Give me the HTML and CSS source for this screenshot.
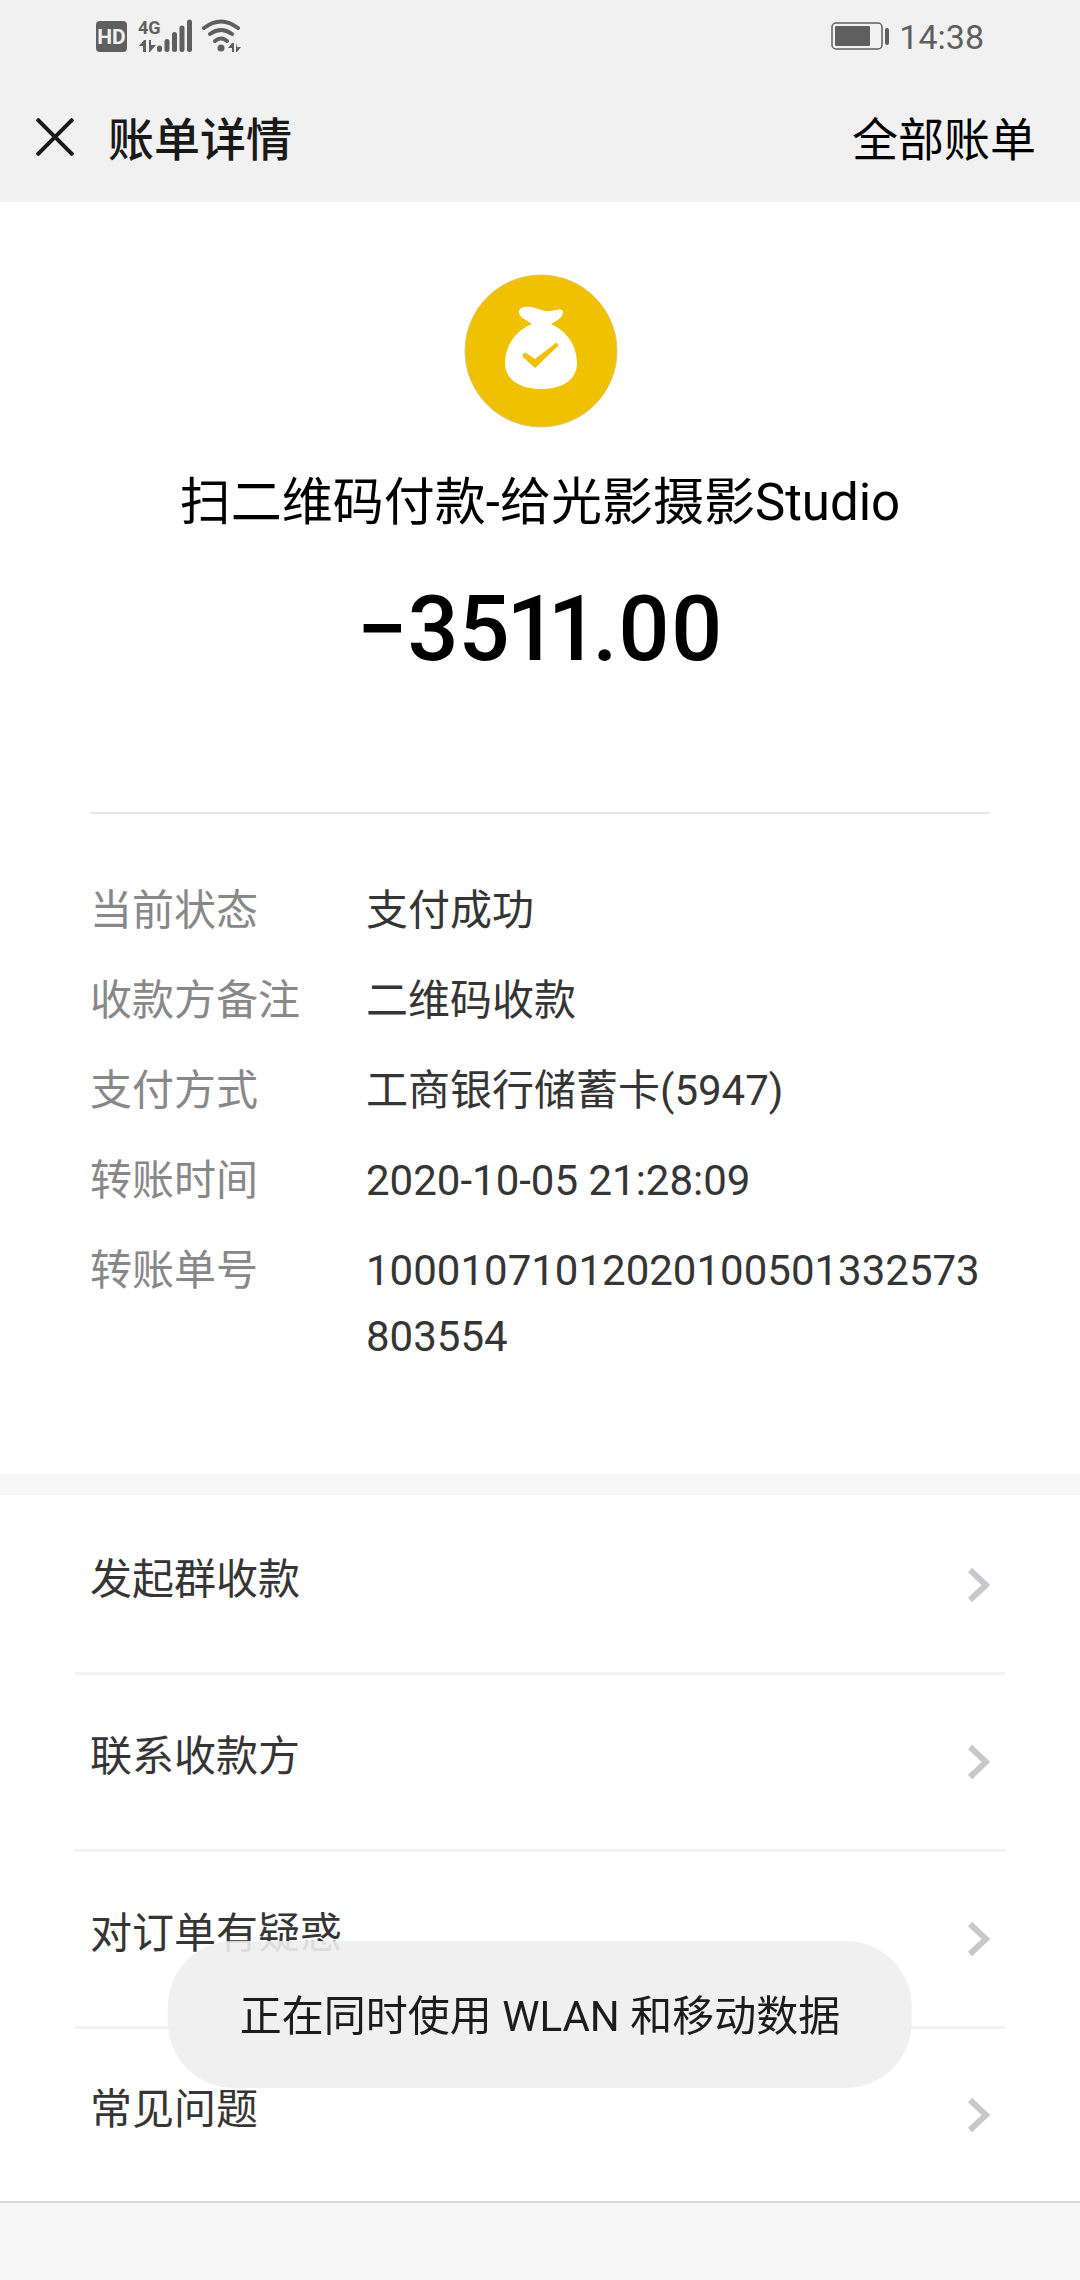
FILE: index.html
```html
<!DOCTYPE html>
<html lang="zh-CN">
<head>
	<meta charset="utf-8">
	<meta name="viewport" content="width=device-width">
	<title>账单详情</title>
	<link rel="stylesheet" href="styles.css">
</head>
<body>
	<div class="statusbar">
		<svg class="status-icons" width="150" height="40" viewBox="0 0 150 40" fill="#5f5f5f">
			<rect x="2" y="5" width="31" height="31" rx="4"/>
			<text x="17.500" y="28" class="hd" text-anchor="middle">HD</text>
			<text x="44" y="18" class="net">4G</text>
			<path d="M45 30l5-6h2v12h-3v-6zM55 24h2v5h5l-6 7h-1z"/>
			<g stroke="#5f5f5f" stroke-width="5" stroke-linecap="round">
				<path d="M65.500 32v1.500M73 25.500v8M80.500 18.500v15M88 12v21.500M95.500 6v27.500"/>
			</g>
			<g fill="none" stroke="#5f5f5f" stroke-width="4" stroke-linecap="round">
				<path d="M110 12q17-13 34 0M116 18q11-8 22 0M121 25q6-5 12 0"/>
			</g>
			<circle cx="127" cy="32" r="3.500"/>
			<path d="M134 32l4-5h2v9h-2v-4zM142 27l1 4h4l-4 5h-1z"/>
		</svg>
		<div class="status-right">
			<svg width="60" height="30" viewBox="0 0 60 30">
				<rect x="1" y="2" width="50" height="26" rx="4" fill="none" stroke="#5f5f5f" stroke-width="1.500"/>
				<rect x="4" y="5" width="35" height="20" rx="1" fill="#5f5f5f"/>
				<rect x="54" y="7" width="4" height="17" rx="2" fill="#5f5f5f"/>
			</svg>
			<span class="time">14:38</span>
		</div>
	</div>

	<header class="header">
		<button class="close" type="button" aria-label="关闭">
			<svg width="38" height="38" viewBox="0 0 38 38" fill="none" stroke="#191919" stroke-width="4">
				<path d="M1 1l36 36M37 1L1 37"/>
			</svg>
		</button>
		<h1 class="title">账单详情</h1>
		<a class="all" href="#">全部账单</a>
	</header>

	<main>
		<section class="bill">
			<div class="summary">
				<svg class="logo" width="156" height="154" viewBox="-1 0 156 154">
					<circle cx="78" cy="77" r="76" fill="#efc100" stroke="#dfc877" stroke-width="1"/>
					<path fill="#fff" d="M69 50C63 46 56 43 56 38C56 33 62 32 68 33C75 34 80 38 88 37C94 36 99 34 100 38C100 43 94 47 88 50C104 57 114 72 114 89C114 106 99 115 78 115C57 115 42 106 42 89C42 72 53 56 69 50Z"/>
					<path fill="#efc100" d="M61 79Q59 80 60 83L72 94L95 72Q96 69 93 69L72 85L63 79Z"/>
				</svg>
				<p class="name">扫二维码付款-给光影摄影Studio</p>
				<p class="amount">−3511.00</p>
			</div>
			<dl class="details">
				<dt>当前状态</dt><dd>支付成功</dd>
				<dt>收款方备注</dt><dd>二维码收款</dd>
				<dt>支付方式</dt><dd>工商银行储蓄卡(5947)</dd>
				<dt>转账时间</dt><dd>2020-10-05 21:28:09</dd>
				<dt>转账单号</dt><dd>10001071012020100501332573803554</dd>
			</dl>
		</section>

		<nav class="links">
			<a class="link" href="#"><span class="label">发起群收款</span><svg class="arrow" width="22" height="36" viewBox="0 0 22 36"><path d="M2 3l16 15L2 33"/></svg></a>
			<a class="link" href="#"><span class="label">联系收款方</span><svg class="arrow" width="22" height="36" viewBox="0 0 22 36"><path d="M2 3l16 15L2 33"/></svg></a>
			<a class="link" href="#"><span class="label">对订单有疑惑</span><svg class="arrow" width="22" height="36" viewBox="0 0 22 36"><path d="M2 3l16 15L2 33"/></svg></a>
			<a class="link" href="#"><span class="label">常见问题</span><svg class="arrow" width="22" height="36" viewBox="0 0 22 36"><path d="M2 3l16 15L2 33"/></svg></a>
		</nav>
	</main>

	<div class="toast" role="status">正在同时使用 WLAN 和移动数据</div>
</body>
</html>
```
FILE: styles.css
```css
* {
	box-sizing: border-box;
}
body {
	min-height: 100vh;
	margin: 0;
	background: #f7f7f7;
	color: #353535;
	font-family: Roboto, "Noto Sans CJK SC", sans-serif;
	font-size: 42px;
	line-height: 66px;
}
h1, p, dl, dd {
	margin: 0;
}
a {
	color: inherit;
	text-decoration: none;
}

/* status bar */
.statusbar {
	display: flex;
	justify-content: space-between;
	align-items: center;
	height: 72px;
	padding: 0 96px 0 94px;
	background: #f1f1f1;
	color: #5f5f5f;
}
.hd {
	fill: #f1f1f1;
	font-size: 21px;
	font-weight: 700;
}
.net {
	font-size: 18px;
	font-weight: 700;
}
.status-right {
	display: flex;
	align-items: center;
	gap: 8px;
}
.time {
	padding-top: 2px;
	font-size: 34px;
}

/* header */
.header {
	display: flex;
	align-items: center;
	height: 130px;
	padding: 0 44px 0 36px;
	background: #f1f1f1;
}
.close {
	display: flex;
	padding: 0;
	border: none;
	background: none;
}
.title,
.all {
	padding-top: 6px;
	font-size: 46px;
}
.title {
	flex: 1;
	margin-left: 34px;
	color: #191919;
	font-weight: 500;
}
.all {
	color: #000;
}

/* bill */
.bill {
	padding: 72px 90px 104px;
	background: #fff;
}
.summary {
	display: flex;
	flex-direction: column;
	align-items: center;
	padding-bottom: 126px;
	border-bottom: 2px solid #e7e7e7;
	color: #000;
}
.name {
	margin-top: 42px;
	font-size: 51px;
}
.amount {
	margin-top: 38px;
	font-size: 90px;
	font-weight: 500;
	font-variant-numeric: proportional-nums;
	line-height: 112px;
}
.details {
	display: grid;
	grid-template-columns: 276px 1fr;
	row-gap: 24px;
	padding-top: 64px;
}
.details dt {
	color: #888;
}
.details dd {
	word-break: break-all;
}

/* links */
.links {
	margin-top: 21px;
	padding: 3px 75px 0;
	border-bottom: 2px solid #d9d9d9;
	background: #fff;
}
.link {
	display: flex;
	justify-content: space-between;
	align-items: center;
	height: 177px;
	padding: 0 15px;
	border-bottom: 3px solid #f2f2f2;
}
.link:last-child {
	height: 172px;
	border-bottom: none;
}
.label {
	padding-bottom: 10px;
}
.arrow {
	fill: none;
	stroke: #c7c7cc;
	stroke-width: 6;
}

/* toast */
.toast {
	position: fixed;
	bottom: 192px;
	left: 50%;
	padding: 43px 72px 38px;
	border-radius: 66px;
	background: rgba(238, 238, 238, .9);
	color: #1c1c1c;
	white-space: nowrap;
	transform: translateX(-50%);
}
```
